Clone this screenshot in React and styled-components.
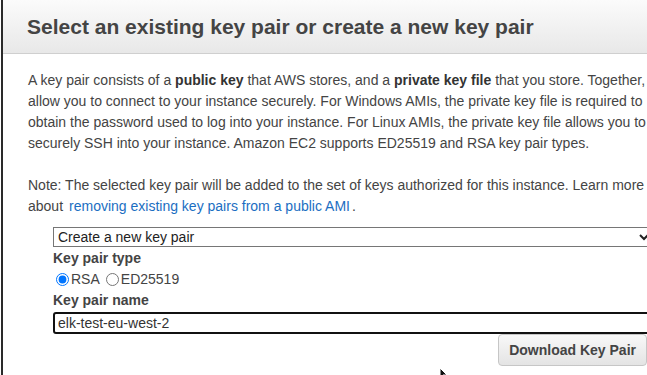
import React from 'react';
import styled, { createGlobalStyle } from 'styled-components';

const GlobalStyle = createGlobalStyle`
  html, body {
    margin: 0;
    padding: 0;
    background: #fff;
    overflow: hidden;
  }
`;

const Panel = styled.div`
  position: relative;
  margin-left: 1px;
  width: 680px;
  height: 375px;
  border-left: 2px solid #2a2a2a;
  font-family: "Liberation Sans", Arial, sans-serif;
  color: #444;
  background: #fff;
`;

const Header = styled.div`
  height: 53px;
  display: flex;
  align-items: center;
  padding-left: 24px;
  background: linear-gradient(to bottom, #fbfbfb, #e8e8e8);
  border-bottom: 1px solid #cfcfcf;
`;

const Title = styled.h2`
  margin: 0;
  font-size: 21px;
  font-weight: bold;
  color: #444;
`;

const Body = styled.div`
  padding: 16px 0 0 25px;
`;

const Para = styled.p`
  margin: 0 0 21px;
  width: 618px;
  font-size: 14px;
  line-height: 21px;
  color: #444;

  b {
    color: #333;
  }
`;

const Link = styled.a`
  color: #1b6ec2;
  text-decoration: none;
  margin: 0 2px 0 6px;
`;

const Form = styled.div`
  display: flex;
  flex-direction: column;
  align-items: flex-start;
  margin: -11px 0 0 25px;
`;

const Select = styled.select`
  width: 600px;
  height: 20px;
  font-family: "Liberation Sans", Arial, sans-serif;
  font-size: 14px;
  color: #222;
  border: 1px solid #767676;
  border-radius: 0;
  background: #fff;
  padding: 0;
`;

const Label = styled.div`
  font-size: 14px;
  font-weight: bold;
  color: #444;
  line-height: 21px;
  margin-top: ${(p) => p.$top || 0}px;
`;

const RadioRow = styled.div`
  display: flex;
  align-items: center;
  font-size: 14px;
  line-height: 21px;
  color: #444;
`;

const Radio = styled.input`
  margin: 0 2px 0 ${(p) => p.$gap || 3}px;
  width: 13px;
  height: 13px;
`;

const TextInput = styled.input`
  box-sizing: border-box;
  width: 600px;
  height: 22px;
  margin-top: 1px;
  padding: 0 3px;
  font-family: "Liberation Sans", Arial, sans-serif;
  font-size: 14px;
  color: #333;
  border: 2px solid #111;
  border-radius: 3px;
  outline: none;
`;

const ButtonRow = styled.div`
  width: 594px;
  display: flex;
  justify-content: flex-end;
`;

const Button = styled.button`
  height: 32px;
  padding: 0 10px;
  font-family: "Liberation Sans", Arial, sans-serif;
  font-size: 14px;
  font-weight: bold;
  color: #444;
  background: linear-gradient(to bottom, #f8f8f8, #e4e4e4);
  border: 1px solid #c6c6c6;
  border-radius: 4px;
`;

const Pointer = styled.svg`
  position: absolute;
  left: 436px;
  top: 367px;
`;

export default function App() {
  return (
    <>
      <GlobalStyle />
      <Panel>
        <Header>
          <Title>Select an existing key pair or create a new key pair</Title>
        </Header>
        <Body>
          <Para>
            A key pair consists of a <b>public key</b> that AWS stores, and a <b>private key file</b> that
            you store. Together, allow you to connect to your instance securely. For Windows AMIs, the
            private key file is required to obtain the password used to log into your instance. For Linux
            AMIs, the private key file allows you to securely SSH into your instance. Amazon EC2 supports
            ED25519 and RSA key pair types.
          </Para>
          <Para>
            Note: The selected key pair will be added to the set of keys authorized for this instance. Learn
            more about<Link href="#">removing existing key pairs from a public AMI</Link>.
          </Para>
          <Form>
            <Select defaultValue="new">
              <option value="new">Create a new key pair</option>
            </Select>
            <Label $top={1}>Key pair type</Label>
            <RadioRow>
              <Radio type="radio" name="kind" defaultChecked />
              RSA
              <Radio type="radio" name="kind" $gap={6} />
              ED25519
            </RadioRow>
            <Label>Key pair name</Label>
            <TextInput defaultValue="elk-test-eu-west-2" />
            <ButtonRow>
              <Button>Download Key Pair</Button>
            </ButtonRow>
          </Form>
        </Body>
        <Pointer width="12" height="12" viewBox="0 0 12 12">
          <path d="M1 1 L1 11 L4 8 L8 8 Z" fill="#111" stroke="#fff" strokeWidth="1" />
        </Pointer>
      </Panel>
    </>
  );
}
